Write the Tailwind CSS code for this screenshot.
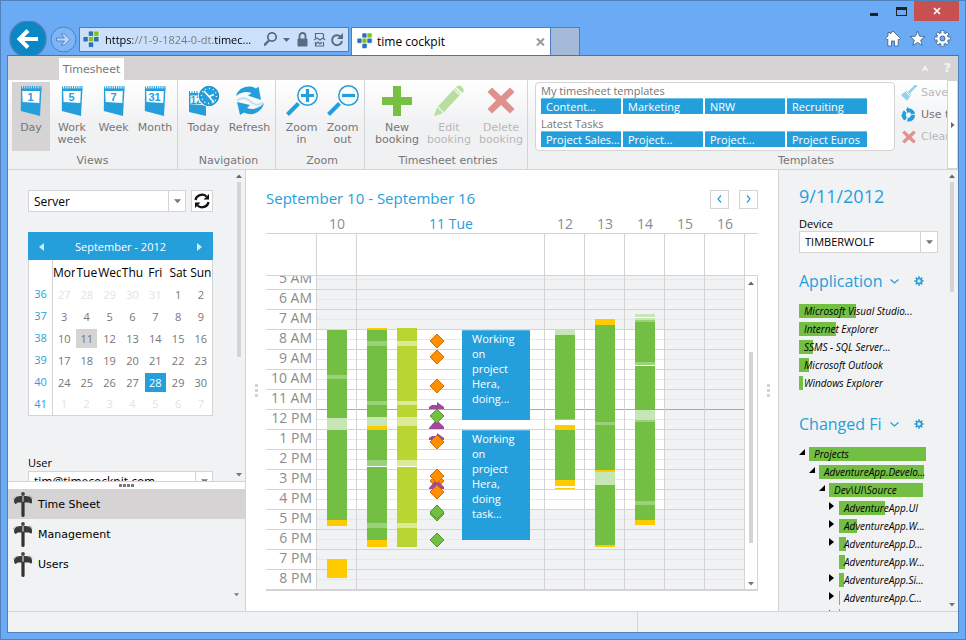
<!DOCTYPE html>
<html lang="en">
<head>
<meta charset="utf-8">
<title>time cockpit</title>
<script src="https://cdn.jsdelivr.net/npm/@tailwindcss/browser@4"></script>
</head>
<body class="h-screen overflow-hidden font-['Open_Sans','Noto_Sans',sans-serif] text-[12px] text-black">
<svg class="hidden">
  <symbol id="logo" viewBox="0 0 18 18">
    <g stroke="#fff" stroke-width=".6">
      <rect x="5.300" y="0" width="5.400" height="5.400" rx="1.200" fill="#2a6fc0"/><rect x="10.600" y="0" width="5.400" height="5.400" rx="1.200" fill="#7cc520"/>
      <rect x="0" y="5.500" width="5.400" height="5.400" rx="1.200" fill="#2a6fc0"/><rect x="5.300" y="5.500" width="5.400" height="5.400" rx="1.200" fill="#7cc520"/><rect x="10.600" y="5.500" width="5.400" height="5.400" rx="1.200" fill="#2a6fc0"/>
      <rect x="5.300" y="11" width="5.400" height="5.400" rx="1.200" fill="#2a6fc0"/>
    </g>
  </symbol>
  <symbol id="sheet" viewBox="0 0 22 31">
    <path d="M1 3.500 L21.500 3.500 L20 31 L0.800 26 Z" fill="#259fdc"/>
    <path d="M2.200 6 L19.800 6 L19.300 18 L2.600 17 Z" fill="#fff"/>
    <path d="M1.500 1.500v3M3.700 1v3.500M5.900 1v3.500M8.100 1v3.500M10.300 1v3.500M12.500 1v3.500M14.700 1v3.500M16.900 1v3.500M19.100 1v3.500M21 1v3.500" stroke="#259fdc" stroke-width="1.100"/>
  </symbol>
  <symbol id="gear" viewBox="0 0 16 16">
    <circle cx="8" cy="8" r="4" fill="none" stroke="currentColor" stroke-width="2.600"/>
    <path d="M8 .5v3M8 12.500v3M.5 8h3M12.500 8h3M2.700 2.700l2.100 2.100M11.200 11.200l2.100 2.100M13.300 2.700l-2.100 2.100M4.800 11.200l-2.100 2.100" stroke="currentColor" stroke-width="2.600"/>
  </symbol>
  <symbol id="sign" viewBox="0 0 20 26">
    <circle cx="10" cy="2" r="1.900" fill="#444"/>
    <path d="M1 8.500C1.500 5 5 3.800 9.500 4v6.500H5C4 10.500 3.500 12 2.500 12 1.500 11.500 1 10 1 8.500Z" fill="#3a3a3a"/>
    <path d="M10.500 4C15 3.800 18.500 4.600 19 8v2.500c-.5 1.500-1.500 1-3 0h-5.500Z" fill="#3a3a3a"/>
    <path d="M0 7l4-3M16 3.500l3.500 2.500" stroke="#aaa" stroke-width="1"/>
    <path d="M10 4v6.500" stroke="#999" stroke-width="1.200"/>
    <path d="M10 11v12.500" stroke="#333" stroke-width="3.200" stroke-linecap="round"/>
  </symbol>
  <symbol id="cross" viewBox="0 0 28 28">
    <path d="M5 1 L14 9.500 L23 1 L27.500 5.500 L19 14 L27.500 22.500 L23 27 L14 18.500 L5 27 L.5 22.500 L9 14 L.5 5.500Z" fill="#e0918d"/>
  </symbol>
  <symbol id="up" viewBox="0 0 6 4"><path d="M0 4L3 0.500L6 4Z" fill="#666"/></symbol>
  <symbol id="down" viewBox="0 0 6 4"><path d="M0 0L3 3.500L6 0Z" fill="#777"/></symbol>
</svg>

<div class="flex h-full flex-col border border-[#4f81bb] bg-[#6babf6] px-[7px] pb-[6px]">
  <!-- window buttons -->
  <div class="-mx-px flex h-5 shrink-0 justify-end">
    <button aria-label="Minimize" class="flex w-7 items-center justify-center"><svg width="8" height="12"><path d="M0 8h8v3H0z" fill="#222"/></svg></button>
    <button aria-label="Maximize" class="flex w-[26px] items-center justify-center"><svg width="11" height="9"><path d="M0 0h11v9H0zM1 3v5h9V3z" fill="#222" fill-rule="evenodd"/></svg></button>
    <button aria-label="Close" class="flex w-[45px] items-center justify-center bg-[#c75050]"><svg width="8" height="8"><path d="M1 1l6 6M7 1L1 7" stroke="#fff" stroke-width="1.700"/></svg></button>
  </div>
  <!-- address row -->
  <div class="flex h-[34px] shrink-0 overflow-hidden">
    <button aria-label="Back" class="-mt-px ml-px size-[38px] shrink-0"><svg width="38" height="38" viewBox="0 0 38 38"><circle cx="19" cy="19" r="18" fill="#0a87c4" stroke="#4c7fb0" stroke-width="1.500"/><path d="M29 19H11M19 10.500L10.500 19L19 27.500" fill="none" stroke="#fff" stroke-width="4"/></svg></button>
    <button aria-label="Forward" class="ml-[3px] mt-[3px] size-[27px] shrink-0 self-center"><svg width="27" height="27" viewBox="0 0 27 27"><circle cx="13.500" cy="13.500" r="12.500" fill="#7fb5f5" stroke="#4c80bd"/><path d="M6.500 12h8l-3.500-4h3.500l5.500 5.500-5.500 5.500H11l3.500-4h-8z" fill="#b8d8fb" stroke="#4c80bd" stroke-width=".9"/></svg></button>
    <div class="mt-[6px] ml-[2px] flex h-[25px] w-[270px] shrink-0 items-center border border-[#4a7ebd] bg-[#cbe1fb] pr-[2px] pl-[3px]">
      <svg class="size-[18px] shrink-0"><use href="#logo"/></svg>
      <input aria-label="Address" value="https://1-9-1824-0-dt.timec..." class="ml-1 h-5 w-0 flex-1 bg-[linear-gradient(90deg,#000_28px,#777_28px,#777_108px,#000_108px)] bg-clip-text text-[11px] text-transparent outline-none">
      <svg class="shrink-0" width="82" height="18" fill="none" stroke="#5a6b80">
        <circle cx="8" cy="6" r="4.200" stroke-width="1.800"/><path d="M5 9.500L0 14.500" stroke-width="2.400"/>
        <path d="M19 7h7l-3.500 4z" fill="#5a6b80" stroke="none"/>
        <path d="M34 8h9v7h-9z" fill="#5a6b80"/><path d="M35.500 8V5a3 3 0 0 1 6 0v3" stroke-width="1.800"/>
        <path d="M51.500 7V2.500h7l1 1V7M51.500 11v4h8v-4M50 9l3-2 3 2 3-2 2 2M52 13l2-2 2 2 2-2" stroke-width="1.200"/>
        <path d="M76.500 5.500A5 5 0 1 0 78 10" stroke-width="2"/><path d="M79 2v6h-6z" fill="#5a6b80" stroke="none"/>
      </svg>
    </div>
    <div class="mt-[6px] ml-[2px] flex h-7 w-[200px] shrink-0 items-center border border-b-0 border-[#4a7ebd] bg-white pr-[5px] pl-[5px]">
      <svg class="size-[17px] shrink-0"><use href="#logo"/></svg>
      <span class="ml-[3px] flex-1">time cockpit</span>
      <button aria-label="Close tab"><svg width="9" height="8"><path d="M1 .5l7 7M8 .5l-7 7" stroke="#999" stroke-width="2"/></svg></button>
    </div>
    <button aria-label="New tab" class="mt-[6px] -ml-px h-7 w-[30px] shrink-0 border border-b-0 border-[#4a7ebd] bg-[#a3bbd9]"></button>
    <div class="ml-auto flex items-center gap-[8px] pr-[7px]">
      <button aria-label="Home"><svg width="16" height="17" viewBox="0 0 16 17"><path d="M8 1l7.500 7.500-1.500 1.300-.8-.6V16H9.500v-5h-3v5H2.800V9.200l-.8.6L.5 8.500 3 6V2.500h2.200V4z" fill="#fff" stroke="#44658c" stroke-width=".9"/></svg></button>
      <button aria-label="Favorites"><svg width="17" height="17" viewBox="0 0 16 17"><path d="M8 1l2 5.200 5.500.3-4.300 3.500 1.500 5.500L8 12.400l-4.700 3.100L4.800 10 .5 6.500 6 6.200z" fill="#fff" stroke="#44658c" stroke-width=".9"/></svg></button>
      <button aria-label="Tools" class="size-[17px]"><svg class="size-[17px]" viewBox="0 0 17 17"><path d="M8.500 .5v16M.5 8.500h16M2.800 2.800l11.400 11.400M14.200 2.800L2.800 14.200" stroke="#44658c" stroke-width="4"/><circle cx="8.500" cy="8.500" r="6" fill="#44658c"/><path d="M8.500 1v15M1 8.500h15M3.200 3.200l10.600 10.600M13.800 3.200L3.200 13.800" stroke="#fff" stroke-width="2.200"/><circle cx="8.500" cy="8.500" r="5.400" fill="#fff"/><circle cx="8.500" cy="8.500" r="2.500" fill="#6babf6" stroke="#44658c"/></svg></button>
    </div>
  </div>

  <div class="-mx-px flex min-h-0 flex-1 flex-col border border-[#4f81bb] border-t-[#666e7a] bg-[#f1f2f4]">
    <!-- ribbon tabs -->
    <div class="flex h-6 shrink-0 items-end bg-[#d5d3d4] pl-[51px] font-['DejaVu_Sans',sans-serif] text-[11px] text-[#767676]">
      <button class="h-[22px] w-[65px] bg-white pt-[2px]">Timesheet</button>
      <div class="ml-auto flex h-full items-center gap-[14px] pr-[7px] text-[#f4f4f4]">
        <svg width="8" height="7"><path d="M1 6L4 1L7 6L4 4z" fill="#f4f4f4" stroke="#f4f4f4"/></svg>
        <b class="text-[13px]">?</b>
      </div>
    </div>

    <!-- ribbon -->
    <div class="flex h-[90px] shrink-0 overflow-hidden border-b border-[#d5d3d4] bg-linear-to-b from-white to-[#f0f1f3] to-50% font-['DejaVu_Sans',sans-serif] text-[11px] leading-[12px] text-[#767676]">
      <section class="flex w-[170px] shrink-0 flex-col border-r border-[#d5d3d4] pt-[2px]">
        <div class="flex pl-1">
          <button class="flex h-[69px] w-[38px] flex-col items-center bg-[#d5d3d4] pt-[3px]"><svg class="mb-[6px] h-[31px] w-[22px]"><use href="#sheet"/><text x="10.500" y="16" text-anchor="middle" font-family="Liberation Sans" font-weight="bold" font-size="11" fill="#259fdc">1</text></svg>Day</button>
          <button class="flex h-[69px] w-[44px] flex-col items-center pt-[3px]"><svg class="mb-[6px] h-[31px] w-[22px]"><use href="#sheet"/><text x="10.500" y="16" text-anchor="middle" font-family="Liberation Sans" font-weight="bold" font-size="11" fill="#259fdc">5</text></svg>Work<br>week</button>
          <button class="flex h-[69px] w-[39px] flex-col items-center pt-[3px]"><svg class="mb-[6px] h-[31px] w-[22px]"><use href="#sheet"/><text x="10.500" y="16" text-anchor="middle" font-family="Liberation Sans" font-weight="bold" font-size="11" fill="#259fdc">7</text></svg>Week</button>
          <button class="flex h-[69px] w-[44px] flex-col items-center pt-[3px]"><svg class="mb-[6px] h-[31px] w-[22px]"><use href="#sheet"/><text x="10.500" y="16" text-anchor="middle" font-family="Liberation Sans" font-weight="bold" font-size="11" fill="#259fdc">31</text></svg>Month</button>
        </div>
        <h2 class="mt-1 text-center">Views</h2>
      </section>
      <section class="flex w-[98px] shrink-0 flex-col border-r border-[#d5d3d4] pt-[2px]">
        <div class="flex justify-center gap-[2px]">
          <button class="flex h-[69px] w-[44px] flex-col items-center pt-[3px]"><svg class="mb-[6px]" width="32" height="31" viewBox="0 0 32 31"><path d="M1 8H18V31L1 27Z" fill="#259fdc"/><path d="M2.500 10.500h14v9.500l-14-.8z" fill="#fff"/><path d="M1.500 6v3M4 6v3M6.500 6v3M9 6v3M11.500 6v3" stroke="#259fdc"/><text x="2.500" y="19" font-family="Liberation Sans" font-weight="bold" font-size="10" fill="#259fdc">12</text><circle cx="21" cy="11" r="10.800" fill="#fff"/><circle cx="21" cy="11" r="9.700" fill="#259fdc" stroke="#1d8cc7" stroke-width="1"/><circle cx="21" cy="11" r="7.500" fill="none" stroke="#fff" stroke-width="1.400" stroke-dasharray="1 2.900"/><path d="M16 6l5 5.500 5-2M21 11.500l5 6" fill="none" stroke="#fff" stroke-width="1.500"/></svg>Today</button>
          <button class="flex h-[69px] w-[44px] flex-col items-center pt-[3px]"><svg class="mb-[6px]" width="30" height="31" viewBox="0 0 30 31"><path d="M1 11C3 3 13-1 21 3.500L23.500 1.500 26 15 13 10.500 16.500 8C12 6 6 7 1 11Z" fill="#259fdc"/><path d="M29 18C27 27 17 32 9 27.500L5 30 2 17 15 20 12 23C18 25.500 25 23 29 18Z" fill="#259fdc"/><path d="M2 15.500c4-3 9-3 13 .5 4 4 9 5 13 1.500" fill="none" stroke="#bfe2f5" stroke-width="2"/></svg>Refresh</button>
        </div>
        <h2 class="mt-1 pl-1 text-center">Navigation</h2>
      </section>
      <section class="flex w-[89px] shrink-0 flex-col border-r border-[#d5d3d4] pt-[2px]">
        <div class="flex pl-[5px]">
          <button class="flex h-[69px] w-[41px] flex-col items-center pt-[3px]"><svg class="mb-[6px]" width="32" height="31" viewBox="0 0 32 31" fill="none" stroke="#259fdc"><circle cx="21.500" cy="10.500" r="9.700" stroke-width="1.500"/><path d="M15 10.500h13M21.500 4v13" stroke-width="3.200"/><path d="M12.500 18.500L1.500 29.500" stroke-width="4"/></svg>Zoom<br>in</button>
          <button class="flex h-[69px] w-[41px] flex-col items-center pt-[3px]"><svg class="mb-[6px]" width="32" height="31" viewBox="0 0 32 31" fill="none" stroke="#259fdc"><circle cx="21.500" cy="10.500" r="9.700" stroke-width="1.500"/><path d="M15 10.500h13" stroke-width="3.200"/><path d="M12.500 18.500L1.500 29.500" stroke-width="4"/></svg>Zoom<br>out</button>
        </div>
        <h2 class="mt-1 pl-1 text-center">Zoom</h2>
      </section>
      <section class="flex w-[163px] shrink-0 flex-col border-r border-[#d5d3d4] pt-[2px]">
        <div class="flex pl-[6px]">
          <button class="flex h-[69px] w-[52px] flex-col items-center pt-[3px]"><svg class="mb-[6px]" width="30" height="31"><path d="M11 1h8v11h11v8H19v11h-8V20H0v-8h11z" fill="#76c043"/></svg>New<br>booking</button>
          <button disabled class="flex h-[69px] w-[52px] flex-col items-center pt-[3px] text-[#b8b8b8]"><svg class="mb-[6px]" width="32" height="31" viewBox="0 0 32 31"><path d="M1 31L4 22.500 22 3 28 9 9.500 28.500Z" fill="#b9dfa0"/><path d="M23 2Q25-.5 28 1L30.500 4Q31.500 6 29.500 8Z" fill="#b9dfa0"/><path d="M21 4.500L27.500 10.500M4 22.500Q7 22 7 25 10 25.500 9.500 28" stroke="#f4f5f6" stroke-width="1.200" fill="none"/></svg>Edit<br>booking</button>
          <button disabled class="flex h-[69px] w-[52px] flex-col items-center pt-[3px] text-[#b8b8b8]"><svg class="mb-[6px] h-[31px] w-7"><use href="#cross"/></svg>Delete<br>booking</button>
        </div>
        <h2 class="mt-1 pl-1 text-center">Timesheet entries</h2>
      </section>
      <section class="min-w-0 flex-1 overflow-hidden pt-[2px]">
        <div class="w-[556px]">
          <div class="flex h-[69px]">
            <div class="ml-[7px] h-[69px] w-[360px] shrink-0 rounded-sm border border-[#d5d3d4] bg-white px-[5px] pt-[2px] font-['Open_Sans','Noto_Sans',sans-serif]">
              <h3 class="h-[13px] leading-[11px]">My timesheet templates</h3>
              <div id="t1" class="flex h-5 gap-[2px]"></div>
              <h3 class="h-[13px] leading-[11px]">Latest Tasks</h3>
              <div id="t2" class="flex gap-[2px]"></div>
            </div>
            <div class="ml-[6px] flex shrink-0 flex-col">
              <button disabled class="flex h-[22px] items-center gap-1 whitespace-nowrap text-[#b8b8b8]"><svg width="16" height="16" viewBox="0 0 16 16"><path d="M15.500 0L8 7.500" stroke="#93cfee" stroke-width="2.500"/><path d="M5.500 5.500l4.500 4.500-4 6L0 10z" fill="#93cfee"/><path d="M4.500 6.500l5 5" stroke="#fff"/></svg>Save as</button>
              <button class="flex h-[22px] items-center gap-1 whitespace-nowrap"><svg width="16" height="16" viewBox="0 0 16 16"><circle cx="7.500" cy="8" r="4.700" fill="none" stroke="#259fdc" stroke-width="3.800" stroke-dasharray="8.300 1.540"/><path d="M6 0l4 3-4 3zM0 8l5 0-2 5zM14 8l-3 5-2-4z" fill="#259fdc"/></svg>Use template</button>
              <button disabled class="flex h-[22px] items-center gap-1 whitespace-nowrap text-[#b8b8b8]"><svg width="16" height="14" viewBox="0 0 28 28"><use href="#cross"/></svg>Clear</button>
            </div>
          </div>
          <h2 class="mt-1 text-center">Templates</h2>
        </div>
      </section>
      <button aria-label="Scroll ribbon" class="flex w-[11px] shrink-0 items-center justify-center border border-[#d5d3d4] bg-white"><svg width="4" height="6"><path d="M0 0l3.500 3L0 6z" fill="#666"/></svg></button>
    </div>

    <div class="flex min-h-0 flex-1">
      <!-- left panel -->
      <aside class="flex w-[238px] shrink-0 flex-col border-r border-[#d5d3d4]">
        <div class="flex min-h-0 flex-1 overflow-hidden">
          <div class="ml-5 w-[185px] shrink-0 pt-5">
            <div class="flex gap-[5px]">
              <div class="relative w-[158px]">
                <select aria-label="Source" class="h-[22px] w-full appearance-none border border-[#d5d3d4] bg-white pt-px pl-[5px]"><option>Server</option></select>
                <span class="pointer-events-none absolute inset-y-0 right-0 flex w-[18px] items-center justify-center border border-[#d5d3d4]"><svg class="h-[5px] w-[7px]"><use href="#down"/></svg></span>
              </div>
              <button aria-label="Reload" class="flex h-[22px] w-[22px] items-center justify-center border border-[#d5d3d4] bg-white"><svg width="16" height="16" viewBox="0 0 16 16" fill="none" stroke="#111" stroke-width="2.200"><path d="M1.500 7A6.500 6 0 0 1 12.500 3.500M14.500 9A6.500 6 0 0 1 3.500 12.500"/><path d="M15 1v5.500H9.500zM1 15V9.500h5.500z" fill="#111" stroke="none"/></svg></button>
            </div>
            <div class="mt-5 flex h-7 items-center justify-between bg-[#259fdc] px-[11px] pt-[2px] text-[11px] text-white">
              <button aria-label="Previous month"><svg width="5" height="8"><path d="M5 0v8L0 4z" fill="#cfeaf8"/></svg></button>
              <span>September - 2012</span>
              <button aria-label="Next month"><svg width="5" height="8"><path d="M0 0v8l5-4z" fill="#cfeaf8"/></svg></button>
            </div>
            <table class="w-full table-fixed border-collapse border border-t-0 border-[#d5d3d4] bg-white text-center text-[11px] text-[#767676]">
              <thead><tr id="dow" class="h-[23px] text-[12px] leading-[18px] text-black"></tr></thead>
              <tbody id="days"></tbody>
            </table>
            <label for="user" class="mt-[39px] block h-4 text-[11px] leading-4">User</label>
            <div class="relative">
              <select id="user" class="h-[22px] w-full appearance-none border border-[#d5d3d4] bg-white pl-[5px] text-[12px]"><option>tim@timecockpit.com</option></select>
              <span class="pointer-events-none absolute inset-y-0 right-0 flex w-[18px] items-center justify-center border border-[#d5d3d4]"><svg class="h-[5px] w-[7px]"><use href="#down"/></svg></span>
            </div>
          </div>
          <div class="ml-auto flex w-[13px] flex-col items-center py-1">
            <svg class="h-1 w-[6px]"><use href="#up"/></svg>
            <div class="mt-1 h-[175px] w-1 bg-[#d5d3d4]"></div>
            <svg class="mt-auto h-1 w-[6px]"><use href="#down"/></svg>
          </div>
        </div>
        <div class="flex h-2 shrink-0 items-center justify-center gap-[1px] border-t border-[#d5d3d4] bg-white">
          <i class="size-[3px] bg-[#777]"></i><i class="size-[3px] bg-[#777]"></i><i class="size-[3px] bg-[#777]"></i><i class="size-[3px] bg-[#777]"></i>
        </div>
        <nav class="flex h-[122px] shrink-0 flex-col font-['DejaVu_Sans',sans-serif] text-[11px]">
          <a href="#" class="flex h-[30px] items-center gap-[5px] bg-[#d5d3d4] pt-[2px] pl-[5px]"><svg class="h-[26px] w-5"><use href="#sign"/></svg>Time Sheet</a>
          <a href="#" class="flex h-[30px] items-center gap-[5px] pt-[2px] pl-[5px]"><svg class="h-[26px] w-5"><use href="#sign"/></svg>Management</a>
          <a href="#" class="flex h-[30px] items-center gap-[5px] pt-[2px] pl-[5px]"><svg class="h-[26px] w-5"><use href="#sign"/></svg>Users</a>
          <svg class="mt-auto mr-[6px] mb-[14px] h-1 w-[5px] self-end"><use href="#down"/></svg>
        </nav>
      </aside>

      <!-- schedule -->
      <main class="flex min-w-0 flex-1 items-stretch bg-white">
        <div class="flex w-5 shrink-0 flex-col items-center justify-center gap-[2px]">
          <i class="size-[3px] bg-[#d5d3d4]"></i><i class="size-[3px] bg-[#d5d3d4]"></i><i class="size-[3px] bg-[#d5d3d4]"></i>
        </div>
        <div class="flex min-w-0 flex-1 flex-col">
          <div class="flex h-[44px] shrink-0 items-center gap-[10px] pt-3">
            <h1 class="flex-1 text-[15px] text-[#259fdc]">September 10 - September 16</h1>
            <button aria-label="Previous" class="mb-[-2px] flex size-[19px] items-center justify-center border border-[#d5d3d4]"><svg width="5" height="8" fill="none" stroke="#259fdc" stroke-width="1.200"><path d="M4 .5L1 4l3 3.500"/></svg></button>
            <button aria-label="Next" class="mb-[-2px] flex size-[19px] items-center justify-center border border-[#d5d3d4]"><svg width="5" height="8" fill="none" stroke="#259fdc" stroke-width="1.200"><path d="M1 .5L4 4 1 7.500"/></svg></button>
          </div>
          <div id="heads" class="flex h-[19px] shrink-0 pr-[13px] pl-[51px] text-center text-[14px] leading-[20px] text-[#8c8c8c]"></div>
          <div id="allday" class="flex h-[43px] shrink-0 border-y border-[#d5d3d4] pr-[14px] pl-[50px]"></div>
          <div class="flex h-[315px] shrink-0 border-b-2 border-[#d5d3d4]">
            <div id="hours" class="w-[50px] shrink-0 text-right text-[14px] text-[#8c8c8c]"></div>
            <div id="grid" class="relative flex min-w-0 flex-1"></div>
            <div class="flex w-[14px] shrink-0 flex-col items-center border-x border-[#d5d3d4] pt-[5px] pb-[3px]">
              <svg class="h-1 w-[6px] shrink-0"><use href="#up"/></svg>
              <div class="mt-[67px] h-[191px] w-1 bg-[#d5d3d4]"></div>
              <svg class="mt-auto h-1 w-[6px] shrink-0"><use href="#down"/></svg>
            </div>
          </div>
        </div>
        <div class="flex w-5 shrink-0 flex-col items-center justify-center gap-[2px]">
          <i class="size-[3px] bg-[#d5d3d4]"></i><i class="size-[3px] bg-[#d5d3d4]"></i><i class="size-[3px] bg-[#d5d3d4]"></i>
        </div>
      </main>

      <!-- right panel -->
      <aside class="flex w-[180px] shrink-0 overflow-hidden border-l border-[#d5d3d4]">
        <div class="ml-5 w-[139px] shrink-0 pt-[14px]">
          <h2 class="h-6 text-[18px] leading-6 text-[#259fdc]">9/11/2012</h2>
          <label for="device" class="mt-2 block h-[15px] text-[11px] leading-[15px]">Device</label>
          <div class="relative">
            <select id="device" class="h-[22px] w-full appearance-none border border-[#d5d3d4] bg-white pt-px pl-[5px] text-[11px]"><option>TIMBERWOLF</option></select>
            <span class="pointer-events-none absolute inset-y-0 right-0 flex w-[18px] items-center justify-center border border-[#d5d3d4]"><svg class="h-[5px] w-[7px]"><use href="#down"/></svg></span>
          </div>
          <div class="mt-[16px] flex h-6 items-center text-[#259fdc]">
            <h3 class="w-[83px] overflow-hidden text-[16px] leading-6 whitespace-nowrap">Applications</h3>
            <button aria-label="Expand applications" class="ml-2"><svg width="9" height="5" fill="none" stroke="#259fdc" stroke-width="1.300"><path d="M.5.500l4 3.500 4-3.500"/></svg></button>
            <button aria-label="Application settings" class="ml-[15px]"><svg class="size-[10px]" viewBox="0 0 16 16"><use href="#gear"/></svg></button>
          </div>
          <ul id="apps" class="mt-[11px]"></ul>
          <div class="mt-[18px] flex h-6 items-center text-[#259fdc]">
            <h3 class="w-[83px] overflow-hidden text-[16px] leading-6 whitespace-nowrap">Changed Files</h3>
            <button aria-label="Expand changed files" class="ml-2"><svg width="9" height="5" fill="none" stroke="#259fdc" stroke-width="1.300"><path d="M.5.500l4 3.500 4-3.500"/></svg></button>
            <button aria-label="Changed files settings" class="ml-[15px]"><svg class="size-[10px]" viewBox="0 0 16 16"><use href="#gear"/></svg></button>
          </div>
          <ul id="files" class="mt-[11px]"></ul>
        </div>
        <div class="ml-auto flex w-[13px] flex-col items-center py-1">
          <svg class="h-1 w-[6px]"><use href="#up"/></svg>
          <div class="mt-1 h-[110px] w-1 bg-[#d5d3d4]"></div>
          <svg class="mt-auto h-1 w-[6px]"><use href="#down"/></svg>
        </div>
      </aside>
    </div>

    <footer class="flex h-[21px] shrink-0 border-t border-[#d5d3d4]">
      <div class="flex-1 border-r border-[#d5d3d4]"></div>
      <div class="w-[320px]"></div>
    </footer>
  </div>
</div>

<script>
const $ = id => document.getElementById(id);
const tile = t => `<button class="h-4 w-20 border-t border-[#6fc0e8] bg-[#259fdc] pl-[5px] text-left text-[11px] leading-[15px] whitespace-nowrap text-white">${t}</button>`;
$('t1').innerHTML = ['Content...', 'Marketing', 'NRW', 'Recruiting'].map(tile).join('');
$('t2').innerHTML = ['Project Sales...', 'Project...', 'Project...', 'Project Euros'].map(tile).join('');

// month calendar
$('dow').innerHTML = '<th class="w-[24px] border-r border-[#d5d3d4]"></th>' +
  ['Mon', 'Tue', 'Wed', 'Thu', 'Fri', 'Sat', 'Sun'].map(d => `<th class="p-0 pt-[3px] font-normal"><span class="block w-full overflow-hidden">${d}</span></th>`).join('');
let body = '';
for (let w = 0; w < 6; w++) {
  body += `<tr class="h-[22px]"><th class="border-r border-[#d5d3d4] p-0 font-normal text-[#259fdc]">${36 + w}</th>`;
  for (let d = 0; d < 7; d++) {
    const n = w * 7 + d - 4;
    const out = n < 1 || n > 30;
    const day = n < 1 ? n + 31 : n > 30 ? n - 30 : n;
    const cls = out ? 'text-[#e3e3e3]' : n === 11 ? 'bg-[#d5d3d4]' : n === 28 ? 'bg-[#259fdc] text-white' : '';
    body += `<td class="p-0"><span class="mx-auto block h-[19px] w-[21px] leading-[19px] ${cls}">${day}</span></td>`;
  }
  body += '</tr>';
}
$('days').innerHTML = body;

// schedule: one row per hour, the first one is partly scrolled away
const hours = ['5 AM','6 AM','7 AM','8 AM','9 AM','10 AM','11 AM','12 PM','1 PM','2 PM','3 PM','4 PM','5 PM','6 PM','7 PM','8 PM'];
$('hours').innerHTML = hours.map((h, i) => `<div class="${i ? 'h-5' : 'h-[14px]'} flex items-end justify-end overflow-hidden border-b border-[#d5d3d4] pr-1 pb-[2px] leading-[18px]">${h}</div>`).join('');
const G = 'bg-[#72bf44]', Y = 'bg-[#ffcb00]', L = 'bg-[#b9d532]', M = 'bg-[#9ad279]', P = 'bg-[#c6e6b5]', N = 'bg-[#dce999]', W = 'bg-white';
const limeCuts = [[341,346,N],[401,405,N],[417,426,N],[460,466,N],[466,467,W],[523,528,N]];
const cols = [
  {name: '10', cls: 'w-10 shrink-0', bars: [[10, [[330,520,G],[375,379,M],[418,430,P],[520,526,Y],[559,578,Y]]]]},
  {name: '11 Tue', cls: 'min-w-0 flex-1', now: true, bars: [
    [10, [[328,330,Y],[330,540,G],[341,346,M],[401,405,M],[417,426,P],[426,430,Y],[460,466,M],[466,467,W],[523,528,M],[540,547,Y]]],
    [40, [[328,547,L], ...limeCuts]]]},
  {name: '12', cls: 'w-10 shrink-0', bars: [[10, [[330,335,P],[335,420,G],[419,420,M],[425,430,Y],[430,480,G],[480,486,Y],[488,489,Y]]]]},
  {name: '13', cls: 'w-10 shrink-0', bars: [[10, [[319,325,Y],[325,470,G],[422,425,M],[470,472,Y],[472,485,P],[485,545,G],[545,547,Y]]]]},
  {name: '14', cls: 'w-10 shrink-0', bars: [[10, [[314,317,P],[317,318,W],[318,320,P],[320,322,M],[322,520,G],[362,365,M],[365,366,W],[410,420,P],[420,422,M],[501,505,M],[520,525,Y]]]]},
  {name: '15', cls: 'w-10 shrink-0', off: true, bars: []},
  {name: '16', cls: 'w-10 shrink-0', off: true, bars: []}
];
$('heads').innerHTML = cols.map(c => `<div class="${c.cls} ${c.now ? 'text-[#259fdc]' : ''}">${c.name}</div>`).join('');
$('allday').innerHTML = cols.map(c => `<div class="${c.cls} border-l border-[#d5d3d4]"></div>`).join('') + '<div class="-mr-px w-px shrink-0 bg-[#d5d3d4]"></div>';
const top0 = 276;
const box = (y0, y1) => `top:${y0 - top0}px;height:${y1 - y0}px`;
const marks = [['o',341],['o',357],['o',386],['p',407],['q',424],['g',416],['p',438],['o',442],['o',481],['q',484],['o',476],['o',492],['g',514],['g',512],['g',540]];
const mark = ([k, y]) => {
  const inner = k === 'p' ? '<path d="M0 10V8l3-2h5V3l7 5v2z" fill="#a0489a"/>'
    : k === 'q' ? '<path d="M0 12l6-7h3l6 6v2H0z" fill="#a0489a"/>'
    : k === 'o' ? '<path d="M8 1l7 7-7 7-7-7z" fill="#ff8f00" stroke="#cf7000"/>'
    : '<path d="M8 1l7 7-7 7-7-7z" fill="#72bf44" stroke="#549a2e"/>';
  return `<svg class="absolute left-[72px] h-4 w-4" viewBox="0 0 16 16" style="top:${y - 8 - top0}px">${inner}</svg>`;
};
const card = (y0, y1, t) => `<button class="absolute left-[105px] flex w-[68px] items-start overflow-hidden border-t border-[#58b5e3] bg-[#259fdc] pr-3 pl-[10px] text-left text-[11px] leading-[15px] text-white" style="${box(y0, y1)}">${t}</button>`;
$('grid').innerHTML =
  cols.map(c => `<div class="${c.cls} relative border-l border-[#d5d3d4] bg-[#f1f2f4]">${c.off ? '' : `<div class="absolute inset-x-0 bg-white" style="${box(329, 509)}"></div>`}</div>`).join('') +
  `<div class="absolute inset-0">${hours.map((h, i) => `<div class="${i ? 'h-5' : 'h-[14px]'} flex flex-col border-b ${h === '11 AM' ? 'border-[#7fb8d3]' : 'border-[#d5d3d4]'}"><div class="${i ? 'h-[10px]' : 'h-[4px]'} border-b border-[#e8e8e8]"></div></div>`).join('')}</div>` +
  `<div class="absolute inset-0 flex">${cols.map(c => `<div class="${c.cls} relative border-l border-[#d5d3d4]">${c.bars.map(([x, segs]) => segs.map(([a, b, k]) => `<div class="absolute w-5 ${k}" style="left:${x}px;${box(a, b)}"></div>`).join('')).join('')}${c.now ? marks.map(mark).join('') + card(330, 420, 'Working on project Hera, doing...') + card(430, 540, 'Working on project Hera, doing task...') : ''}</div>`).join('')}</div>`;

// activity lists
const row = ([t, w, depth, open]) => `<li class="flex h-[18px] items-start" style="padding-left:${(depth || 0) * 10}px">
  ${depth === undefined ? '' : `<span class="flex h-[14px] w-[10px] shrink-0 items-center">${open === 1 ? '<svg width="6" height="6" class="mb-1"><path d="M6 0v6H0z"/></svg>' : open === 2 ? '<svg width="5" height="8" class="mb-1"><path d="M0 0l5 4-5 4z"/></svg>' : ''}</span>`}
  <span class="relative block h-[14px] min-w-0 flex-1"><span class="absolute inset-y-0 left-0 bg-[#72bf44]" style="width:${w}px"></span><span class="relative block pl-[5px] text-[10px] leading-[15px] whitespace-nowrap italic">${t}</span></span></li>`;
$('apps').innerHTML = [['Microsoft Visual Studio...',57],['Internet Explorer',37],['SSMS - SQL Server...',14],['Microsoft Outlook',10],['Windows Explorer',4]].map(row).join('');
$('files').innerHTML = [['Projects',117,0,1],['AdventureApp.Develo...',105,1,1],['Dev\\UI\\Source',94,2,1],['AdventureApp.UI',46,3,2],['AdventureApp.W...',18,3,2],['AdventureApp.D...',7,3,2],['AdventureApp.W...',6,3,0],['AdventureApp.Si...',5,3,2],['AdventureApp.C...',1,3,2],['AdventureApp.T...',1,3,2]].map(row).join('');
</script>
</body>
</html>
